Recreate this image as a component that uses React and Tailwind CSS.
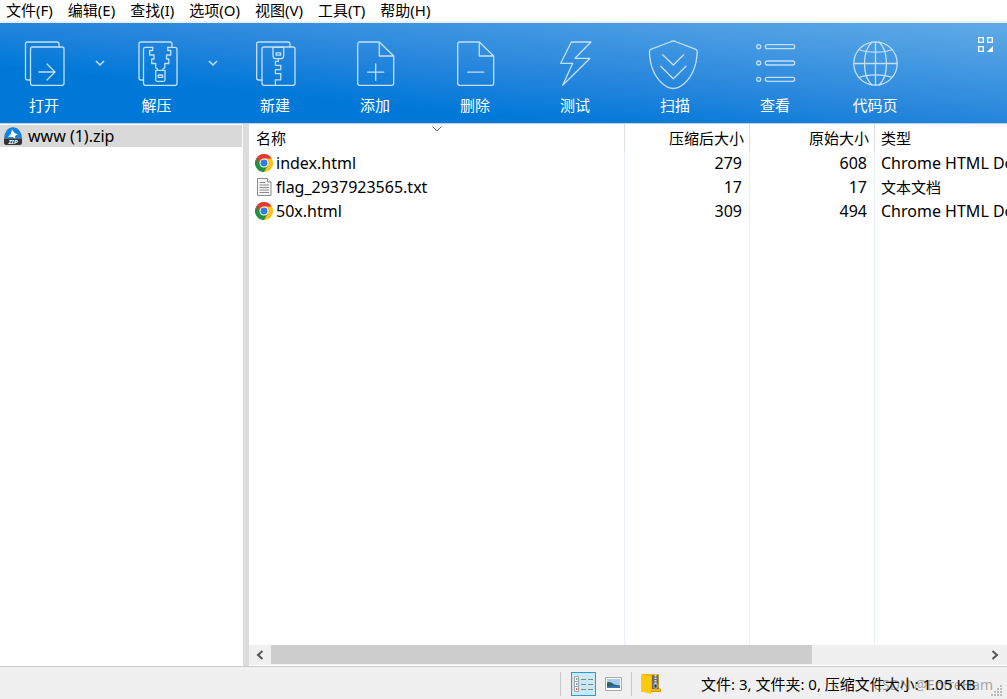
import React from 'react';

const MENU = ['文件(F)', '编辑(E)', '查找(I)', '选项(O)', '视图(V)', '工具(T)', '帮助(H)'];

const FILES = [
  { name: 'index.html', icon: 'chrome', packed: 279, size: 608, type: 'Chrome HTML Document' },
  { name: 'flag_2937923565.txt', icon: 'text', packed: 17, size: 17, type: '文本文档' },
  { name: '50x.html', icon: 'chrome', packed: 309, size: 494, type: 'Chrome HTML Document' },
];

/* Toolbar drawings, all on a 48x48 board */
const ICONS = {
  open: (
    <>
      <path d="M10.5 41H7.5a2 2 0 0 1-2-2V5a2 2 0 0 1 2-2H37a2 2 0 0 1 2 2v3" />
      <rect x="10.5" y="8" width="33.5" height="38.3" rx="2" />
      <path d="M19 33h16M27 25l8 8-8 8" />
    </>
  ),
  extract: (
    <>
      <path d="M10.5 41H8a2 2 0 0 1-2-2V5a2 2 0 0 1 2-2h29a2 2 0 0 1 2 2v3" />
      <path d="M19.7 8.3h-7.2a2 2 0 0 0-2 2v34a2 2 0 0 0 2 2H42a2 2 0 0 0 2-2v-34a2 2 0 0 0-2-2h-7.2" />
      <path d="M19.7 8.3v3.2h-3v4.5H21v4h-2.3v4.5h4v4.2l2 1.6" />
      <path d="M34.8 8.3v3.2h3v4.5h-4.3v4h2.3v4.5h-4v4.2l-2 1.6" />
      <path d="M22.7 31.3h9.3v9.5a1.5 1.5 0 0 1-1.5 1.5h-6.3a1.5 1.5 0 0 1-1.5-1.5z" />
      <rect x="25.2" y="36" width="4.4" height="2.4" />
    </>
  ),
  create: (
    <>
      <path d="M11 41H7.7a2 2 0 0 1-2-2V5a2 2 0 0 1 2-2H37a2 2 0 0 1 2 2v3" />
      <rect x="11" y="8" width="33" height="38.3" rx="2" />
      <path d="M22 8.3h10.7v8.4a3 3 0 0 1-3 3H25a3 3 0 0 1-3-3z" />
      <rect x="25.2" y="13.8" width="4.4" height="2.4" />
      <path d="M27.4 19.7v2.6h-3v4h5.4v4.3h-5.4v4h5.4v6.2h-5.4v5.5" />
    </>
  ),
  add: (
    <>
      <path d="M28.3 3H8.7a2 2 0 0 0-2 2v39.3a2 2 0 0 0 2 2h32a2 2 0 0 0 2-2V17zV17h14.4" />
      <path d="M16.7 33.2h16M24.7 25v16.3" />
    </>
  ),
  remove: (
    <>
      <path d="M28.3 3H8.7a2 2 0 0 0-2 2v39.3a2 2 0 0 0 2 2h32a2 2 0 0 0 2-2V17zV17h14.4" />
      <path d="M16.7 33.2h16" />
    </>
  ),
  test: <path d="M20.3 3H40L24 19.3h15L11.7 46.3l10-22h-12z" />,
  scan: (
    <>
      <path d="M22.3 2c1.2 0 2.2.5 3.2 1l18.8 7.2c1.4.5 2 1.4 1.9 2.8-.6 15.5-5 24.5-13.2 31.8-4 3.4-7.5 4.7-10.7 4.7s-6.7-1.3-10.7-4.7C3.4 37.5-1 28.5-1.6 13c-.1-1.4.5-2.3 1.9-2.8L19.1 3c1-.5 2-1 3.2-1z" />
      <path d="M11.7 15.7 22.3 26l10.4-10.3M9.7 27.3l12.6 12.4L35 27.3" />
    </>
  ),
  view: (
    <>
      <circle cx="7.7" cy="7.7" r="2" />
      <rect x="14.3" y="5.7" width="29.4" height="4" rx="2" />
      <circle cx="7.7" cy="24" r="2" />
      <rect x="14.3" y="22" width="29.4" height="4" rx="2" />
      <circle cx="7.7" cy="40.3" r="2" />
      <rect x="14.3" y="38.3" width="29.4" height="4" rx="2" />
    </>
  ),
  codepage: (
    <>
      <circle cx="24.5" cy="24.5" r="21.7" />
      <path d="M24.5 2.8v43.4M2.8 24.5h43.4" />
      <path d="M21 3c-4.5 4-7.5 12-7.5 21.5S16.5 42 21 46M28 3c4.5 4 7.5 12 7.5 21.5S32.5 42 28 46" />
      <path d="M8 10.5c4 1.7 10 2.7 16.5 2.7S37 12.2 41 10.5M8 38.5c4-1.7 10-2.7 16.5-2.7S37 36.8 41 38.5" />
    </>
  ),
};

const TOOLS = [
  { id: 'create', label: '新建' },
  { id: 'add', label: '添加' },
  { id: 'remove', label: '删除' },
  { id: 'test', label: '测试' },
  { id: 'scan', label: '扫描' },
  { id: 'view', label: '查看' },
  { id: 'codepage', label: '代码页' },
];

function ToolButton({ id, label, className = 'w-[100px]' }) {
  return (
    <button type="button" className={`${className} flex shrink-0 flex-col items-center gap-2 pt-4 text-[15px] leading-5 text-white`}>
      <svg viewBox="0 0 48 48" className="size-12 overflow-visible" fill="none" stroke="#c4e0f8" strokeWidth="1.3" strokeLinejoin="round" strokeLinecap="round" aria-hidden="true">
        {ICONS[id]}
      </svg>
      {label}
    </button>
  );
}

function DropButton({ label }) {
  return (
    <button type="button" aria-label={label} className="flex h-20 w-6 shrink-0 items-center justify-center">
      <svg viewBox="0 0 10 6" className="h-1.5 w-2.5 overflow-visible" fill="none" stroke="#c4e0f8" strokeWidth="1.5" aria-hidden="true">
        <path d="M1 1l4 4 4-4" />
      </svg>
    </button>
  );
}

function ChromeIcon() {
  return (
    <svg viewBox="0 0 48 48" className="size-[18px] shrink-0" aria-hidden="true">
      <path fill="#e33b2e" d="M24 24 3.2 12A24 24 0 0 1 44.8 12z" />
      <path fill="#fcc31e" d="M24 24 44.8 12A24 24 0 0 1 24 48z" />
      <path fill="#229342" d="M24 24v24A24 24 0 0 1 3.2 12z" />
      <path fill="#fcc31e" d="M24 12h20.800L34.400 30z" />
      <path fill="#e33b2e" d="M24 12H3.200L13.600 30z" />
      <path fill="#fcc31e" d="M34.400 30 24 48l10.400-6z" />
      <path fill="#229342" d="M34.400 30 24 48 13.600 30zM13.600 30 3.200 12v18z" />
      <path fill="#229342" d="M3.200 12l10.400 18-6 2z" />
      <circle cx="24" cy="24" r="12" fill="#fff" />
      <circle cx="24" cy="24" r="9.3" fill="#2f7bea" />
    </svg>
  );
}

function TextIcon() {
  return (
    <svg viewBox="0 0 18 20" className="h-5 w-[18px] shrink-0" aria-hidden="true">
      <path d="M2.5 1.5h10L16 5v13.5H2.5z" fill="#f6f6f6" stroke="#8d8d8d" />
      <path d="M12.5 1.5V5H16" fill="#fff" stroke="#8d8d8d" />
      <path d="M4.5 5.5h6M4.5 8H14M4.5 10.5H14M4.5 13H14M4.5 15.5H14" stroke="#8c8c8c" />
    </svg>
  );
}

function ZipIcon() {
  return (
    <svg viewBox="0 0 18 18" className="size-[18px] shrink-0" aria-hidden="true">
      <path d="M0 11.5a9 11.2 0 0 1 18 0z" fill="#1183dd" />
      <path d="M8 2.500 10.500 6l3.500 1.200-3 1.800.5 3-3-2L4 9.700l2.700-2.400z" fill="#fff" />
      <path d="M0 11.5h18v4a2.5 2.5 0 0 1-2.500 2.500h-13A2.500 2.500 0 0 1 0 15.500z" fill="#333" />
      <text x="9" y="17" textAnchor="middle" fontSize="6" fontWeight="700" fontStyle="italic" fill="#fff">ZIP</text>
    </svg>
  );
}

function FileTable() {
  const line = 'border-r border-[#e8f1fb]';
  const head = 'border-r border-[#dfdfdf]';

  return (
    <table className="h-full w-full table-fixed border-separate border-spacing-0 whitespace-nowrap">
      <colgroup>
        <col className="w-[376px]" />
        <col className="w-[125px]" />
        <col className="w-[125px]" />
        <col />
      </colgroup>
      <thead>
        <tr className="h-[27px] text-[15px] leading-5">
          <th className={`${head} relative pl-[7px] text-left font-normal`}>
            名称
            <svg viewBox="0 0 10 6" className="absolute top-0.5 left-1/2 h-1.5 w-2.5 -translate-x-1/2" fill="none" stroke="#666" aria-hidden="true">
              <path d="M.5.5 5 5 9.5.5" />
            </svg>
          </th>
          <th className={`${head} pr-[5px] text-right font-normal`}>压缩后大小</th>
          <th className={`${head} pr-[5px] text-right font-normal`}>原始大小</th>
          <th className="pl-1.5 text-left font-normal">类型</th>
        </tr>
      </thead>
      <tbody>
        {FILES.map((file) => (
          <tr key={file.name} className="h-6 text-base leading-6">
            <td className={`${line} pl-1.5`}>
              <div className="flex items-center gap-[3px]">
                {file.icon === 'chrome' ? <ChromeIcon /> : <TextIcon />}
                {file.name}
              </div>
            </td>
            <td className={`${line} pr-[7px] text-right`}>{file.packed}</td>
            <td className={`${line} pr-[7px] text-right`}>{file.size}</td>
            <td className={`overflow-hidden pl-1.5 ${file.icon === 'text' ? 'text-[15px]' : ''}`}>{file.type}</td>
          </tr>
        ))}
        {/* Filler row carries the column lines to the bottom */}
        <tr aria-hidden="true">
          <td className={line} />
          <td className={line} />
          <td className={line} />
          <td />
        </tr>
      </tbody>
    </table>
  );
}

function ScrollBar() {
  return (
    <div className="flex h-5 shrink-0 bg-[#f0f0f0]">
      <button type="button" aria-label="向左滚动" className="flex w-[22px] items-center justify-center">
        <svg viewBox="0 0 8 10" className="h-2.5 w-2" fill="none" stroke="#555" strokeWidth="2" aria-hidden="true">
          <path d="M6.5 1 2 5l4.5 4" />
        </svg>
      </button>
      <div className="flex-1">
        <div className="h-[19px] w-[76%] bg-[#cdcdcd]" />
      </div>
      <button type="button" aria-label="向右滚动" className="flex w-6 items-center justify-center">
        <svg viewBox="0 0 8 10" className="h-2.5 w-2" fill="none" stroke="#555" strokeWidth="2" aria-hidden="true">
          <path d="M1.5 1 6 5 1.5 9" />
        </svg>
      </button>
    </div>
  );
}

function StatusBar() {
  return (
    <footer className="relative flex h-[33px] shrink-0 items-center justify-end border-t border-[#cbcbcb] bg-[#f0f0f0] pt-0.5">
      <span className="mr-2.5 h-6 w-px bg-[#c8c8c8]" />
      <button type="button" aria-label="详细信息" className="flex h-6 w-[25px] items-center justify-center border border-[#2a9bd7] bg-[#cbe8f6]">
        <svg viewBox="0 0 20 16" className="h-4 w-5 shrink-0" aria-hidden="true">
          <path d="M.5.5h4v15h-4zM.5 5.5h4M.5 10.5h4" fill="#fff" stroke="#a5a5a5" />
          <path d="M2 3h1.5" stroke="#3c9a57" strokeWidth="1.5" />
          <path d="M2 8h1.5" stroke="#3f7fe0" strokeWidth="1.5" />
          <path d="M2 13h1.5" stroke="#cf3f35" strokeWidth="1.5" />
          <path d="M7 3.5h5M14 3.5h5M7 8.5h5M14 8.5h5M7 13.5h5M14 13.5h5" stroke="#7d8a90" />
        </svg>
      </button>
      <button type="button" aria-label="缩略图" className="flex h-6 w-[35px] items-center justify-center">
        <svg viewBox="0 0 17 14" className="h-3.5 w-[17px]" aria-hidden="true">
          <path d="M.5.5h16v13H.5z" fill="#fff" stroke="#aaa" />
          <path d="M2 2h13v9H2z" fill="#a9cdf0" />
          <path d="M2 5.5c3-1 5 0 7 2l6 1v1.500H2z" fill="#2c6468" />
          <path d="M2 9.5c5-1 8 0 13-1V11H2z" fill="#3673b8" />
        </svg>
      </button>
      <span className="mr-[9px] h-6 w-px bg-[#c8c8c8]" />
      <button type="button" aria-label="压缩包" className="mr-10">
        <svg viewBox="0 0 20 22" className="h-[22px] w-5" aria-hidden="true">
          <path d="M1 1h17v14h1.500v4H1z" fill="#f2b50c" />
          <path d="M11 2h6.500v14H11z" fill="#6a6a6a" />
          <path d="M14.5 2v9" stroke="#ddd" strokeWidth="2" strokeDasharray="1.5 1" />
          <path d="M13 11h3v4h-3z" fill="#333" stroke="#ddd" strokeWidth=".7" />
          <path d="M0 1.5 10 3v18L0 18.500z" fill="#ffc90d" />
          <path d="M10 18.500h9.500V16" fill="none" stroke="#dc9a00" />
        </svg>
      </button>
      <p className="w-[306px] text-[15px] leading-6 whitespace-nowrap">文件: 3, 文件夹: 0, 压缩文件大小: 1.05 KB</p>
      <span className="pointer-events-none absolute right-3.5 bottom-1 text-sm leading-5 text-[#555]/50">CSDN @EntreHam</span>
      <svg viewBox="0 0 12 12" className="absolute right-1 bottom-0.5 size-3" fill="#bbb" aria-hidden="true">
        <path d="M9 0h2v2H9zM9 3h2v2H9zM6 3h2v2H6zM9 6h2v2H9zM6 6h2v2H6zM3 6h2v2H3zM9 9h2v2H9zM6 9h2v2H6zM3 9h2v2H3zM0 9h2v2H0z" />
      </svg>
    </footer>
  );
}

export default function App() {
  return (
    <div className="flex h-screen flex-col overflow-hidden bg-white font-['Noto_Sans','Noto_Sans_CJK_SC',sans-serif] text-black">
      <nav className="flex h-[23px] shrink-0 items-start gap-[15px] border-b-2 border-[#f0f0f0] pl-1.5 text-[15px] leading-5">
        {MENU.map((item) => (
          <button key={item} type="button" className="shrink-0 whitespace-nowrap">{item}</button>
        ))}
      </nav>

      {/* Toolbar */}
      <header className="flex h-[101px] shrink-0 items-start border-b border-[#b9cfe2] bg-[linear-gradient(to_top_right,#0078d8_0%,#0078d8_28%,#2485dc_50%,#61abe6_100%)]">
        <ToolButton id="open" label="打开" className="w-[88px]" />
        <DropButton label="打开选项" />
        <ToolButton id="extract" label="解压" className="w-[89px]" />
        <DropButton label="解压选项" />
        {TOOLS.map((tool) => (
          <ToolButton key={tool.id} id={tool.id} label={tool.label} />
        ))}
        <button type="button" aria-label="皮肤" className="mt-3.5 mr-3.5 ml-auto">
          <svg viewBox="0 0 15 15" className="size-[15px]" fill="none" stroke="#fff" strokeWidth="1.3" aria-hidden="true">
            <path d="M.7.7h4.6v4.6H.7zM9.7.7h4.6v4.6H9.7zM.7 9.7h4.6v4.6H.7z" />
            <path d="M15 9v6H9z" fill="#fff" stroke="none" />
          </svg>
        </button>
      </header>

      <main className="flex min-h-0 flex-1">
        <aside className="w-[243px] shrink-0 pt-px pr-px">
          <a href="#archive" className="flex h-[22px] items-center gap-1.5 bg-[#d9d9d9] pl-1 text-base leading-5">
            <ZipIcon />
            www (1).zip
          </a>
        </aside>
        <div className="w-1.5 shrink-0 bg-[#dcdcdc]" />
        <section className="flex min-w-0 flex-1 flex-col pb-px">
          <div className="min-h-0 flex-1 overflow-hidden">
            <FileTable />
          </div>
          <ScrollBar />
        </section>
      </main>

      <StatusBar />
    </div>
  );
}
